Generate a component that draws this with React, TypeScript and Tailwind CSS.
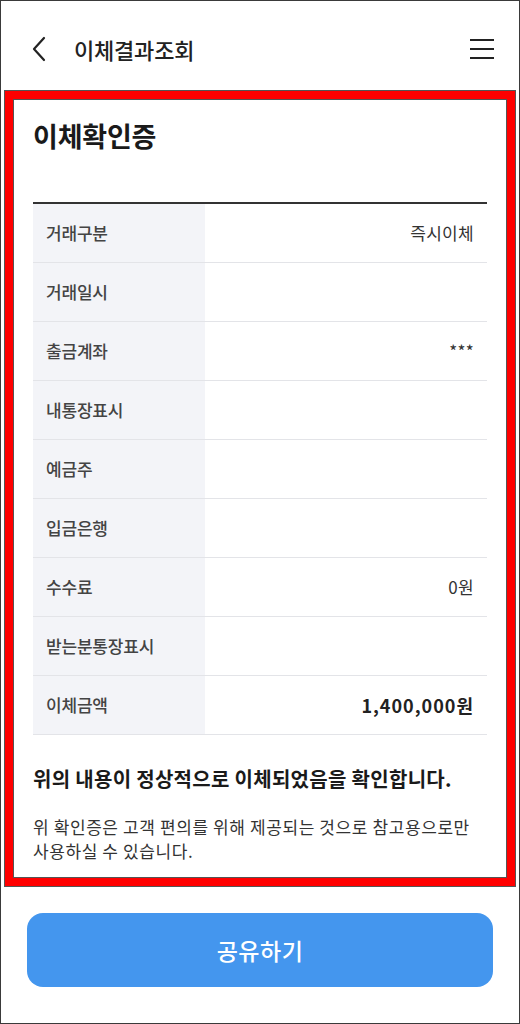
import React from "react";

const rows: { label: string; value: string; bold?: boolean }[] = [
  { label: "거래구분", value: "즉시이체" },
  { label: "거래일시", value: "" },
  { label: "출금계좌", value: "***" },
  { label: "내통장표시", value: "" },
  { label: "예금주", value: "" },
  { label: "입금은행", value: "" },
  { label: "수수료", value: "0원" },
  { label: "받는분통장표시", value: "" },
  { label: "이체금액", value: "1,400,000원", bold: true },
];

export default function App() {
  return (
    <div
      className="w-[520px] h-[1024px] bg-white border border-[#3a3a3a] flex flex-col text-[#222]"
      style={{ fontFamily: '"Noto Sans CJK KR", "Noto Sans", sans-serif' }}
    >
      {/* header */}
      <div className="h-[89px] flex items-center pl-[30px] pr-[24px] pt-[6px]">
        <svg width="16" height="26" viewBox="0 0 16 26" className="mr-[27px]">
          <path d="M13 2 L3 13 L13 24" fill="none" stroke="#222" strokeWidth="2.2" strokeLinecap="round" strokeLinejoin="round" />
        </svg>
        <div className="text-[22px] font-medium leading-none tracking-[-0.2px]">이체결과조회</div>
        <div className="flex-1" />
        <svg width="26" height="22" viewBox="0 0 26 22">
          <path d="M1 2 H25 M1 11 H25 M1 20 H25" stroke="#222" strokeWidth="2" />
        </svg>
      </div>

      {/* red-framed card */}
      <div className="mx-[3px] border border-[#555]">
        <div className="border-[8px] border-[#ff0000]">
          <div className="border border-[#555] bg-white px-[19px] pt-[18px] pb-[14px]">
            <div className="text-[27px] font-bold leading-[36px] text-[#1a1a1a] tracking-[-0.2px]">이체확인증</div>
            <div className="mt-[48px] border-t-2 border-[#333]">
              {rows.map((r) => (
                <div key={r.label} className="flex h-[59px] border-b border-[#e3e4e8]">
                  <div className="w-[172px] bg-[#f3f4f8] flex items-center pl-[13px] text-[17px] font-medium text-[#444] tracking-[-0.2px]">
                    {r.label}
                  </div>
                  <div
                    className={`flex-1 flex items-center justify-end pr-[13px] ${
                      r.bold ? "text-[18px] font-bold text-[#222] tracking-[1px]" : "text-[17px] text-[#333] tracking-[0.3px]"
                    }`}
                  >
                    {r.value}
                  </div>
                </div>
              ))}
            </div>
            <div className="mt-[30px] text-[20px] font-bold leading-[28px] text-[#1a1a1a] tracking-[0.3px]">
              위의 내용이 정상적으로 이체되었음을 확인합니다.
            </div>
            <div className="mt-[22px] text-[17px] leading-[24px] text-[#333] tracking-[0.6px]">
              위 확인증은 고객 편의를 위해 제공되는 것으로 참고용으로만
              <br />
              사용하실 수 있습니다.
            </div>
          </div>
        </div>
      </div>

      {/* button */}
      <div className="px-[26px] mt-[26px]">
        <div className="h-[74px] rounded-[16px] bg-[#4496ee] flex items-center justify-center text-white text-[23px] font-medium tracking-[0.5px]">
          공유하기
        </div>
      </div>
    </div>
  );
}
